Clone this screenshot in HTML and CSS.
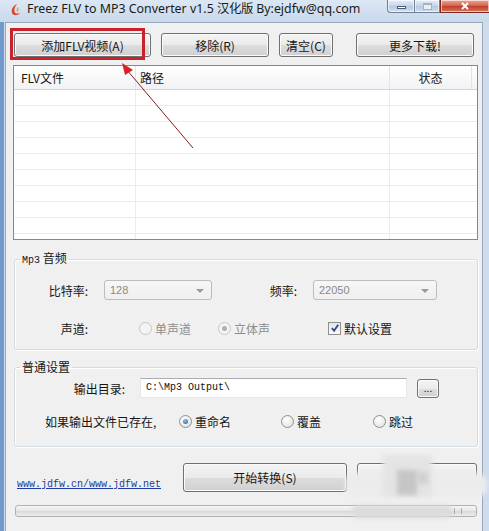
FILE: index.html
```html
<!DOCTYPE html>
<html lang="zh-CN">
<head>
    <meta charset="UTF-8">
    <title>Freez FLV to MP3 Converter</title>
    <link rel="stylesheet" href="styles.css">
</head>
<body>
    <div class="window">
        <div class="titlebar">
            <svg class="app-icon" viewBox="0 0 12 14">
                <path d="M7 1 C3 3 1 6 2 10 C3 13 8 13 10 10 C8 11 5 11 4.5 8.5 C4 6 5 3.5 7 1 Z" fill="#d9482b"/>
                <path d="M8 4 C6.5 5.5 6 7.5 7.5 9 C8.5 8 9 6 8 4 Z" fill="#f29a3a"/>
            </svg>
            <span class="title">Freez FLV to MP3 Converter v1.5 汉化版 By:ejdfw@qq.com</span>
            <div class="caption-buttons">
                <span class="cap cap-min"><i></i></span>
                <span class="cap cap-max"><i></i></span>
                <span class="cap cap-close">
                    <svg viewBox="0 0 10 8"><path d="M2 1 L8 7 M8 1 L2 7" stroke="#fff" stroke-width="2"/></svg>
                </span>
            </div>
        </div>

        <div class="frame">
            <div class="client">
                <div class="toolbar">
                    <button class="btn btn-add">添加FLV视频(A)</button>
                    <button class="btn btn-remove">移除(R)</button>
                    <button class="btn btn-clear">清空(C)</button>
                    <button class="btn btn-more">更多下载!</button>
                </div>

                <div class="list">
                    <div class="list-head">
                        <span class="col-file">FLV文件</span>
                        <span class="col-path">路径</span>
                        <span class="col-state">状态</span>
                        <span class="col-fill"></span>
                    </div>
                    <div class="list-body">
                        <div class="col-file"></div>
                        <div class="col-path"></div>
                        <div class="col-rest"></div>
                    </div>
                </div>

                <fieldset class="group group-audio">
                    <legend><span class="mono">Mp3</span> 音频</legend>
                    <div class="row row-rate">
                        <label class="lbl lbl-bit">比特率:</label>
                        <div class="combo combo-bit">128<span class="combo-arrow"></span></div>
                        <label class="lbl lbl-freq">频率:</label>
                        <div class="combo combo-freq">22050<span class="combo-arrow"></span></div>
                    </div>
                    <div class="row row-channel">
                        <label class="lbl lbl-bit">声道:</label>
                        <span class="option opt-mono disabled"><span class="radio"></span>单声道</span>
                        <span class="option opt-stereo disabled"><span class="radio checked"></span>立体声</span>
                        <span class="option opt-default"><span class="checkbox"><svg viewBox="0 0 11 11"><path d="M2 5.5 L4.5 8.5 L9 2" fill="none" stroke="#2c4a8c" stroke-width="2"/></svg></span>默认设置</span>
                    </div>
                </fieldset>

                <fieldset class="group group-general">
                    <legend>普通设置</legend>
                    <div class="row row-dir">
                        <label class="lbl lbl-dir">输出目录:</label>
                        <div class="textbox mono">C:\Mp3 Output\</div>
                        <button class="btn btn-browse">...</button>
                    </div>
                    <div class="row row-exists">
                        <span class="exists-text">如果输出文件已存在,</span>
                        <span class="option opt-rename"><span class="radio checked active"></span>重命名</span>
                        <span class="option opt-over"><span class="radio"></span>覆盖</span>
                        <span class="option"><span class="radio"></span>跳过</span>
                    </div>
                </fieldset>

                <div class="footer">
                    <a href="#" class="site-link mono">www.jdfw.cn/www.jdfw.net</a>
                    <button class="btn btn-start">开始转换(S)</button>
                    <button class="btn btn-exit"></button>
                </div>

                <div class="progress"><span class="grip"></span></div>
            </div>
        </div>

        <!-- пометки поверх скриншота -->
        <div class="mark-box"></div>
        <svg class="mark-arrow" viewBox="0 0 489 531">
            <line x1="193" y1="148" x2="127" y2="70" stroke="#8a1c1c" stroke-width="1"/>
            <polygon points="122,63 133,70 125,75" fill="#d8222a"/>
        </svg>
        <div class="watermark">
            <span class="wm wm-a"></span>
            <span class="wm wm-b"></span>
            <span class="wm wm-c"></span>
            <span class="wm wm-d"></span>
            <span class="wm wm-e"></span>
        </div>
    </div>
</body>
</html>
```

FILE: styles.css
```css
* {
    box-sizing: border-box;
}

body {
    margin: 0;
    width: 489px;
    height: 531px;
    overflow: hidden;
    font-family: "Noto Sans CJK SC", "Noto Sans", sans-serif;
    font-size: 12px;
    color: #151515;
    background: #c9d9ea;
}

.mono {
    font-family: "Liberation Mono", monospace;
    font-size: 10px;
}

.window {
    position: relative;
    height: 531px;
    display: flex;
    flex-direction: column;
}

/* title bar */
.titlebar {
    height: 22px;
    display: flex;
    align-items: flex-start;
    background: linear-gradient(#dbe7f4, #c8d9eb);
}

.app-icon {
    width: 12px;
    height: 14px;
    margin: 3px 0 0 10px;
}

.title {
    margin: 0 0 0 5px;
    font-family: "Noto Sans", sans-serif;
    font-size: 12.4px;
    line-height: 17px;
    color: #1b1b1b;
    white-space: nowrap;
}

.caption-buttons {
    margin-left: auto;
    display: flex;
}

.cap {
    height: 13px;
    display: flex;
    align-items: center;
    justify-content: center;
    border: 1px solid #6f7f96;
    border-top: none;
    background: linear-gradient(#e6eef7, #c4d5e8 50%, #b4c8de 51%, #d2e0ee);
    box-shadow: inset 0 0 0 1px rgba(255,255,255,0.6);
}

.cap-min {
    width: 27px;
    border-radius: 0 0 0 4px;
    border-right: none;
}

.cap-min i {
    width: 9px;
    height: 3px;
    margin-top: 3px;
    background: #fff;
    border: 1px solid #4b5a70;
}

.cap-max {
    width: 26px;
}

.cap-max i {
    width: 9px;
    height: 7px;
    border: 1px solid #a4b2c3;
    border-top-width: 2px;
    background: #e8eef5;
}

.cap-close {
    width: 49px;
    border-color: #7a2a20;
    border-right: none;
    background: linear-gradient(#eaa898, #d2604a 50%, #c13d27 51%, #d7745c);
}

.cap-close svg {
    width: 10px;
    height: 8px;
}

/* frame and client area */
.frame {
    flex: 1;
    display: flex;
    padding: 0 6px 0 5px;
    background: #cfdced;
    border-left: 4px solid #6f9acb;
}

.client {
    flex: 1;
    display: flex;
    flex-direction: column;
    margin-left: -4px;
    padding: 10px 4px 0 7px;
    background: #f0f0f0;
    border: 1px solid #97a9bd;
    border-bottom: none;
}

.toolbar {
    display: flex;
}

.btn {
    height: 24px;
    padding: 0;
    border: 1px solid #707070;
    border-radius: 3px;
    background: linear-gradient(#f3f3f3, #ebebeb 50%, #dddddd 51%, #d0d0d0);
    box-shadow: inset 0 0 0 1px #fbfbfb;
    font: inherit;
    color: #151515;
}

.btn-add {
    width: 137px;
    margin-left: 1px;
}

.btn-remove {
    width: 108px;
    margin-left: 10px;
}

.btn-clear {
    width: 54px;
    margin-left: 10px;
}

.btn-more {
    width: 118px;
    margin-left: 23px;
}

/* list view */
.list {
    margin-top: 8px;
    height: 175px;
    border: 1px solid #828790;
    background: #fff;
    display: flex;
    flex-direction: column;
}

.list-head {
    display: flex;
    height: 24px;
    border-bottom: 1px solid #d5d5d5;
    background: linear-gradient(#ffffff, #f1f2f4);
}

.list-head span {
    line-height: 23px;
    border-right: 1px solid #e2e4e7;
}

.list-head .col-file {
    width: 122px;
    padding-left: 7px;
}

.list-head .col-path {
    width: 254px;
    padding-left: 4px;
}

.list-head .col-state {
    width: 82px;
    text-align: center;
}

.list-head .col-fill {
    flex: 1;
    border-right: none;
}

.list-body {
    flex: 1;
    display: flex;
}

.list-body div {
    background: repeating-linear-gradient(#fff 0 15px, #ececec 15px 16px);
    border-right: 1px solid #ececec;
}

.list-body .col-file {
    width: 122px;
}

.list-body .col-path {
    width: 254px;
}

.list-body .col-rest {
    flex: 1;
    border-right: none;
}

/* group boxes */
.group {
    margin: 10px 0 0 1px;
    padding: 0;
    min-width: 0;
    border: 1px solid #d3dce3;
    border-radius: 3px;
    box-shadow: inset 1px 1px 0 #fff, 1px 1px 0 #fff;
}

.group legend {
    margin-left: 5px;
    padding: 0 2px;
    line-height: 16px;
}

.group-general {
    margin-top: 9px;
}

.row {
    display: flex;
    align-items: center;
    height: 20px;
}

.lbl {
    text-align: right;
}

.row-rate {
    margin-top: 11px;
}

.row-channel {
    margin-top: 18px;
    margin-bottom: 11px;
}

.lbl-bit {
    width: 73px;
    margin-right: 16px;
}

.lbl-freq {
    width: 85px;
    margin-right: 16px;
}

.combo {
    position: relative;
    height: 20px;
    padding-left: 5px;
    line-height: 18px;
    border: 1px solid #bdbdbd;
    border-radius: 3px;
    background: linear-gradient(#f7f7f7, #efefef);
    font-family: "Liberation Sans", sans-serif;
    font-size: 11px;
    color: #8a8a8a;
}

.combo-bit {
    width: 108px;
}

.combo-freq {
    width: 124px;
}

.combo-arrow {
    position: absolute;
    right: 7px;
    top: 8px;
    border: 4px solid transparent;
    border-top: 4px solid #9a9a9a;
    border-bottom: none;
}

.option {
    display: flex;
    align-items: center;
    gap: 3px;
}

.option.disabled {
    color: #8d8d8d;
}

.opt-mono {
    width: 79px;
    margin-left: 35px;
}

.opt-stereo {
    width: 110px;
}

.radio {
    position: relative;
    width: 13px;
    height: 13px;
    border-radius: 50%;
    border: 1px solid #8f9090;
    background: radial-gradient(circle at 40% 35%, #fff, #dcdcdc);
}

.disabled .radio {
    border-color: #c6c6c6;
    background: #f4f4f4;
}

.radio.checked::after {
    content: "";
    position: absolute;
    left: 3px;
    top: 3px;
    width: 5px;
    height: 5px;
    border-radius: 50%;
    background: #b0b0b0;
}

.radio.active::after {
    background: radial-gradient(circle at 40% 35%, #8cc0f0, #1a56a3);
}

.checkbox {
    width: 13px;
    height: 13px;
    border: 1px solid #8f8f8f;
    background: linear-gradient(#e6e6e6, #fafafa);
    display: flex;
    align-items: center;
    justify-content: center;
}

.checkbox svg {
    width: 10px;
    height: 10px;
}

.row-dir {
    margin-top: 3px;
}

.lbl-dir {
    width: 110px;
    margin-right: 15px;
}

.textbox {
    width: 267px;
    height: 20px;
    padding-left: 5px;
    line-height: 18px;
    border: 1px solid #e2e8ee;
    border-top-color: #abadb3;
    background: #fff;
    color: #111;
}

.btn-browse {
    width: 22px;
    height: 19px;
    margin-left: 10px;
    font-size: 10px;
    line-height: 10px;
}

.row-exists {
    margin-top: 13px;
    margin-bottom: 15px;
    padding-left: 30px;
}

.exists-text {
    width: 134px;
}

.opt-rename {
    width: 102px;
}

.opt-over {
    width: 92px;
}

/* bottom */
.footer {
    display: flex;
    margin-top: 16px;
    padding-left: 4px;
}

.site-link {
    width: 166px;
    align-self: flex-end;
    line-height: 14px;
    color: #1c3aa0;
}

.btn-start {
    width: 164px;
    height: 29px;
}

.btn-exit {
    width: 120px;
    height: 29px;
    margin-left: 10px;
}

.progress {
    position: relative;
    margin: 13px 1px 0 2px;
    height: 12px;
    border: 1px solid #b2b2b2;
    border-radius: 3px;
    background: linear-gradient(#f6f6f6, #e6e6e6 50%, #d9d9d9 51%, #ececec);
}

.grip {
    position: absolute;
    right: 14px;
    top: 2px;
    width: 8px;
    height: 6px;
    border-left: 1px solid #aaa;
    border-right: 1px solid #aaa;
}

/* annotations */
.mark-box {
    position: absolute;
    left: 10px;
    top: 28px;
    width: 135px;
    height: 32px;
    border: 3px solid #c8232c;
}

.mark-arrow {
    position: absolute;
    left: 0;
    top: 0;
    width: 489px;
    height: 531px;
    pointer-events: none;
}

.watermark .wm {
    position: absolute;
    filter: blur(2px);
}

.wm-a {
    left: 345px;
    top: 473px;
    width: 142px;
    height: 24px;
    border-radius: 10px;
    background: #ececec;
}

.wm-b {
    left: 383px;
    top: 455px;
    width: 49px;
    height: 42px;
    background: #e4e4e4;
}

.wm-c {
    left: 397px;
    top: 470px;
    width: 20px;
    height: 25px;
    background: #c6c6c6;
}

.wm-d {
    left: 417px;
    top: 472px;
    width: 11px;
    height: 12px;
    background: #d0d0d0;
}

.wm-e {
    left: 352px;
    top: 505px;
    width: 100px;
    height: 13px;
    border-radius: 6px;
    background: #dcdcdc;
}
```
